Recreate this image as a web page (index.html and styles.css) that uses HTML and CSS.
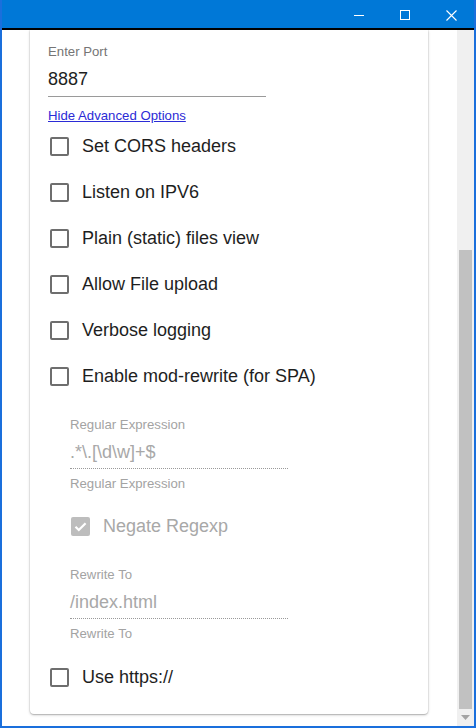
FILE: index.html
```html
<!DOCTYPE html>
<html>
<head>
<meta charset="utf-8">
<link rel="stylesheet" href="styles.css">
</head>
<body>
<div class="window">
  <div class="titlebar">
    <div class="tb-btn">
      <svg width="10" height="10" viewBox="0 0 10 10"><path d="M0 5.5H10" stroke="#fff" stroke-width="1"/></svg>
    </div>
    <div class="tb-btn">
      <svg width="10" height="10" viewBox="0 0 10 10"><rect x="0.5" y="0.5" width="9" height="9" fill="none" stroke="#fff" stroke-width="1"/></svg>
    </div>
    <div class="tb-btn">
      <svg width="11" height="11" viewBox="0 0 11 11"><path d="M0.5 0.5L10.5 10.5M10.5 0.5L0.5 10.5" stroke="#fff" stroke-width="1.1"/></svg>
    </div>
  </div>
  <div class="topline"></div>
  <div class="viewport">
    <div class="content">
      <div class="card">
        <div class="field">
          <div class="label">Enter Port</div>
          <div class="input">8887</div>
        </div>
        <a class="link" href="#">Hide Advanced Options</a>
        <div class="check-row"><span class="box"></span><span class="text">Set CORS headers</span></div>
        <div class="check-row"><span class="box"></span><span class="text">Listen on IPV6</span></div>
        <div class="check-row"><span class="box"></span><span class="text">Plain (static) files view</span></div>
        <div class="check-row"><span class="box"></span><span class="text">Allow File upload</span></div>
        <div class="check-row"><span class="box"></span><span class="text">Verbose logging</span></div>
        <div class="check-row"><span class="box"></span><span class="text">Enable mod-rewrite (for SPA)</span></div>
        <div class="nested">
          <div class="dfield">
            <div class="dlabel">Regular Expression</div>
            <div class="dinput">.*\.[\d\w]+$</div>
            <div class="dhelper">Regular Expression</div>
          </div>
          <div class="check-row disabled">
            <span class="box checked">
              <svg width="19" height="19" viewBox="0 0 19 19"><path d="M4.5 9.8L7.8 13L14.6 6.2" fill="none" stroke="#fff" stroke-width="2.2"/></svg>
            </span>
            <span class="text">Negate Regexp</span>
          </div>
          <div class="dfield second">
            <div class="dlabel">Rewrite To</div>
            <div class="dinput">/index.html</div>
            <div class="dhelper">Rewrite To</div>
          </div>
        </div>
        <div class="check-row last"><span class="box"></span><span class="text">Use https://</span></div>
      </div>
    </div>
    <div class="scrollbar">
      <div class="track"><div class="thumb"></div></div>
      <div class="arrow">
        <svg width="9" height="5" viewBox="0 0 9 5"><path d="M0 0H9L4.5 5Z" fill="#a3a3a3"/></svg>
      </div>
    </div>
  </div>
</div>
</body>
</html>
```

FILE: styles.css
```css
* { box-sizing: border-box; }
html, body { margin: 0; padding: 0; }
body {
  width: 476px;
  height: 728px;
  overflow: hidden;
  font-family: "Liberation Sans", Arial, sans-serif;
  background: #fff;
}
.window {
  width: 476px;
  height: 728px;
  display: flex;
  flex-direction: column;
  border-left: 2px solid #1a6fdc;
  border-right: 2px solid #1a6fdc;
  border-bottom: 2px solid #1a6fdc;
  background: #fff;
}
.titlebar {
  height: 28px;
  background: #0078d7;
  display: flex;
  justify-content: flex-end;
  flex-shrink: 0;
}
.tb-btn {
  width: 46px;
  height: 28px;
  display: flex;
  align-items: center;
  justify-content: center;
  padding-top: 2px;
}
.topline {
  height: 2px;
  background: #000;
  flex-shrink: 0;
}
.viewport {
  flex: 1;
  display: flex;
  min-height: 0;
}
.content {
  flex: 1;
  padding: 0 29px 0 28px;
  overflow: hidden;
  display: flex;
  flex-direction: column;
  justify-content: flex-start;
}
.card {
  background: #fff;
  border-radius: 0 0 4px 4px;
  box-shadow: 0 1px 3px rgba(0,0,0,0.22), 0 1px 1px rgba(0,0,0,0.12), 0 0 0 1px rgba(0,0,0,0.04);
  padding: 14px 18px 14px 18px;
  display: flex;
  flex-direction: column;
  align-items: flex-start;
}
.field { width: 218px; }
.label {
  font-size: 13.2px;
  line-height: 16px;
  color: #757575;
}
.input {
  margin-top: 9px;
  font-size: 18px;
  line-height: 20px;
  color: #1e1e1e;
  padding-bottom: 7px;
  border-bottom: 1px solid #9a9a9a;
}
.link {
  margin-top: 11px;
  font-size: 13.2px;
  line-height: 15px;
  color: #2b2bd6;
  text-decoration: underline;
}
.check-row {
  height: 46px;
  display: flex;
  align-items: center;
  padding-left: 2px;
}
.box {
  width: 19px;
  height: 19px;
  border: 2px solid #6e6e6e;
  border-radius: 2px;
  flex-shrink: 0;
  display: flex;
}
.text {
  margin-left: 13px;
  font-size: 18px;
  color: #1e1e1e;
}
.nested {
  padding-left: 22px;
  margin-top: 18px;
  display: flex;
  flex-direction: column;
  align-items: flex-start;
}
.dfield { width: 218px; }
.dfield.second { margin-top: 18px; }
.dlabel {
  font-size: 13.2px;
  line-height: 16px;
  color: #a3a3a3;
}
.dinput {
  margin-top: 9px;
  font-size: 18px;
  line-height: 20px;
  color: #a8a8a8;
  padding-bottom: 6px;
  border-bottom: 1px dotted #9a9a9a;
}
.dhelper {
  margin-top: 7px;
  font-size: 13.2px;
  line-height: 16px;
  color: #a3a3a3;
}
.check-row.disabled {
  margin-top: 11px;
  padding-left: 1px;
}
.box.checked {
  border: none;
  background: #bdbdbd;
}
.check-row.disabled .text { color: #a8a8a8; }
.check-row.last { margin-top: 12px; }
.scrollbar {
  width: 17px;
  background: #f0f0f0;
  display: flex;
  flex-direction: column;
  flex-shrink: 0;
}
.track {
  flex: 1;
  padding: 220px 2px 0 2px;
  display: flex;
  flex-direction: column;
}
.thumb {
  flex: 1;
  background: #c1c1c1;
}
.arrow {
  height: 17px;
  display: flex;
  align-items: center;
  justify-content: center;
}
```
